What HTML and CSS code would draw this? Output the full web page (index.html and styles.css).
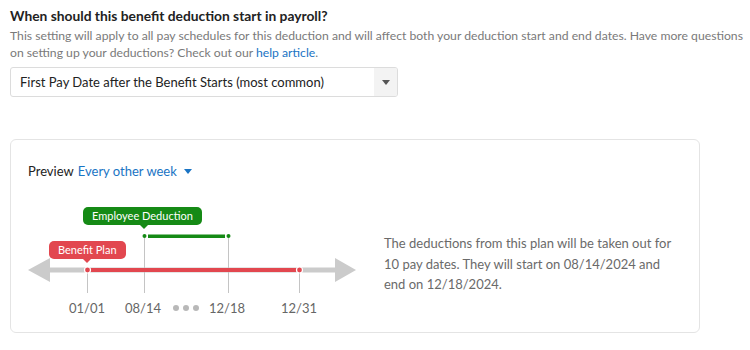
FILE: index.html
```html
<!DOCTYPE html>
<html lang="en">

<head>
    <meta charset="UTF-8">
    <meta name="viewport" content="width=device-width, initial-scale=1.0">
    <title>Deduction start</title>
    <link rel="stylesheet" href="styles.css">
</head>

<body>
    <div class="setting">
        <h3 class="setting_title">When should this benefit deduction start in payroll?</h3>
        <p class="setting_desc">This setting will apply to all pay schedules for this deduction and will affect both your deduction start and end dates. Have more questions on setting up your deductions? Check out our <a href="javascript:;">help article</a>.</p>

        <div class="select">
            <span class="select_value">First Pay Date after the Benefit Starts (most common)</span>
            <span class="select_btn"><i class="caret"></i></span>
        </div>

        <!-- 预览卡片 -->
        <div class="preview">
            <div class="preview_head">
                Preview <a href="javascript:;" class="preview_freq">Every other week <i class="caret caret_blue"></i></a>
            </div>

            <div class="preview_body">
                <div class="timeline">
                    <svg class="timeline_svg" width="330" height="100" viewBox="0 0 330 100">
                        <!-- 灰色轴 -->
                        <rect x="18" y="67.5" width="294" height="5" fill="#cbcbcb" />
                        <polygon points="0,70 22,58 22,82" fill="#cbcbcb" />
                        <polygon points="328,70 307,58 307,82" fill="#cbcbcb" />
                        <!-- 刻度 -->
                        <line x1="59.5" y1="70" x2="59.5" y2="93" stroke="#c4c4c4" />
                        <line x1="116.5" y1="36" x2="116.5" y2="93" stroke="#c4c4c4" />
                        <line x1="200.5" y1="36" x2="200.5" y2="93" stroke="#c4c4c4" />
                        <line x1="271.5" y1="70" x2="271.5" y2="93" stroke="#c4c4c4" />
                        <!-- 福利计划 -->
                        <rect x="59" y="68" width="212" height="4" fill="#e2474f" />
                        <circle cx="59.5" cy="70" r="3" fill="#e2474f" stroke="#fff" stroke-width="1.2" />
                        <circle cx="271.5" cy="70" r="3" fill="#e2474f" stroke="#fff" stroke-width="1.2" />
                        <!-- 员工扣款 -->
                        <rect x="120" y="34.5" width="77" height="3.5" fill="#158a15" />
                        <circle cx="116.5" cy="36" r="2" fill="#158a15" />
                        <circle cx="200.5" cy="36" r="2" fill="#158a15" />
                    </svg>

                    <span class="tag tag_green">Employee Deduction</span>
                    <span class="tag tag_red">Benefit Plan</span>

                    <div class="dates">
                        <span class="date d1">01/01</span>
                        <span class="date d2">08/14</span>
                        <span class="more"><i></i><i></i><i></i></span>
                        <span class="date d3">12/18</span>
                        <span class="date d4">12/31</span>
                    </div>
                </div>

                <p class="preview_text">The deductions from this plan will be taken out for 10 pay dates. They will start on 08/14/2024 and end on 12/18/2024.</p>
            </div>
        </div>
    </div>
</body>

</html>
```

FILE: styles.css
```css
* {
    margin: 0;
    padding: 0;
    box-sizing: border-box;
}

body {
    font-family: Lato, "Open Sans", sans-serif;
    color: #222;
    background: #fff;
}

.setting {
    padding: 7px 4px 0 10px;
}

.setting_title {
    font-size: 13.8px;
    font-weight: 700;
    line-height: 18px;
    color: #222;
}

.setting_desc {
    margin-top: 2px;
    font-size: 12.2px;
    line-height: 17px;
    color: #7a7a7a;
}

.setting_desc a {
    color: #1a74c4;
    text-decoration: none;
}

/* 下拉框 */
.select {
    margin-top: 6px;
    width: 388px;
    height: 30px;
    display: flex;
    border: 1px solid #dcdcdc;
    border-radius: 3px;
    overflow: hidden;
}

.select_value {
    flex: 1;
    padding-left: 9px;
    font-size: 13px;
    line-height: 28px;
    color: #222;
}

.select_btn {
    width: 23px;
    background-color: #f3f3f3;
    display: flex;
    align-items: center;
    justify-content: center;
}

.caret {
    display: inline-block;
    width: 0;
    height: 0;
    border-left: 4px solid transparent;
    border-right: 4px solid transparent;
    border-top: 5px solid #555;
}

.caret_blue {
    border-top-color: #1a74c4;
    margin-left: 4px;
    vertical-align: 2px;
}

/* 预览卡片 */
.preview {
    margin-top: 42px;
    width: 690px;
    height: 194px;
    border: 1px solid #e4e4e4;
    border-radius: 6px;
    padding: 22px 17px 0 17px;
}

.preview_head {
    font-size: 13px;
    line-height: 18px;
    color: #222;
}

.preview_freq {
    color: #1a74c4;
    text-decoration: none;
    margin-left: 1px;
}

.preview_body {
    display: flex;
    align-items: flex-start;
    margin-top: 20px;
}

.timeline {
    position: relative;
    width: 330px;
    height: 120px;
    flex-shrink: 0;
}

.timeline_svg {
    position: absolute;
    left: 0;
    top: 0;
}

.tag {
    position: absolute;
    height: 18px;
    padding: 0 9px;
    font-size: 11px;
    line-height: 18px;
    color: #fff;
    border-radius: 5px;
    white-space: nowrap;
}

.tag::after {
    content: '';
    position: absolute;
    bottom: -4px;
    border-left: 4px solid transparent;
    border-right: 4px solid transparent;
    border-top: 4px solid;
}

.tag_green {
    left: 55px;
    top: 7px;
    background-color: #158a15;
}

.tag_green::after {
    left: 57px;
    border-top-color: #158a15;
}

.tag_red {
    left: 21px;
    top: 41px;
    background-color: #e2474f;
}

.tag_red::after {
    left: 34px;
    border-top-color: #e2474f;
}

.dates {
    position: absolute;
    left: 0;
    top: 99px;
    width: 330px;
    height: 18px;
}

.date {
    position: absolute;
    top: 0;
    width: 50px;
    margin-left: -25px;
    text-align: center;
    font-size: 13px;
    line-height: 18px;
    color: #666;
}

.d1 {
    left: 59px;
}

.d2 {
    left: 115px;
}

.d3 {
    left: 199px;
}

.d4 {
    left: 271px;
}

.more {
    position: absolute;
    left: 145px;
    top: 6px;
    display: flex;
    gap: 4px;
}

.more i {
    width: 6px;
    height: 6px;
    border-radius: 50%;
    background-color: #b8b8b8;
}

.preview_text {
    margin-left: 26px;
    margin-top: 33px;
    width: 295px;
    font-size: 13px;
    line-height: 20.5px;
    color: #6a6a6a;
}
```
